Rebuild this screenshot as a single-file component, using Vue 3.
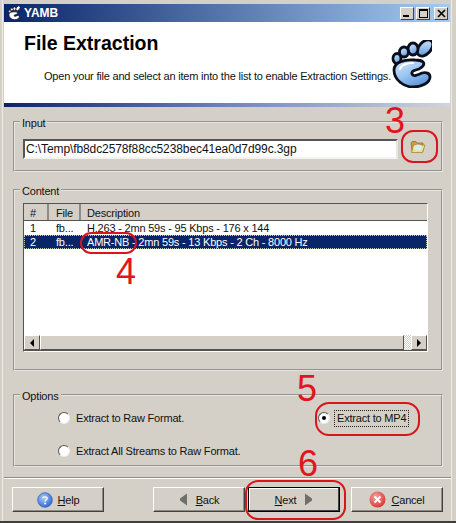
<script setup>
const rows = [
  { id: 1, file: 'fb...', desc: 'H.263 - 2mn 59s - 95 Kbps - 176 x 144', selected: false },
  { id: 2, file: 'fb...', desc: 'AMR-NB - 2mn 59s - 13 Kbps - 2 Ch - 8000 Hz', selected: true }
]

const notes = [
  { n: 3, cls: 'n3' },
  { n: 4, cls: 'n4' },
  { n: 5, cls: 'n5' },
  { n: 6, cls: 'n6' }
]
</script>

<template>
  <div class="window">
    <div class="titlebar">
      <svg class="title-foot" viewBox="0 0 41 48">
        <g fill="#fff" stroke="#111" stroke-width="2.5">
          <ellipse cx="34" cy="8" rx="6" ry="9.500" transform="rotate(42 34 8)" />
          <ellipse cx="22" cy="9" rx="5" ry="6" />
          <ellipse cx="13" cy="12" rx="4.500" ry="5" />
          <ellipse cx="6" cy="18.500" rx="4" ry="5" />
          <path d="M24 20C14 19 3 22 3 30C3 40 13 47 22 47C30 47 39 43 39 37C39 33 35 32 31 33C27 35 22 37 21 34C20 31 24 30 28 29C32 27 34 24 32 22C30 20 26 20 24 20Z" />
        </g>
      </svg>
      <span class="title-text">YAMB</span>
      <div class="controls">
        <span class="ctl"><i class="min"></i></span>
        <span class="ctl"><i class="max"></i></span>
        <span class="ctl close">
          <svg viewBox="0 0 9 9" width="9" height="9"><path d="M1 1L8 8M8 1L1 8" stroke="#000" stroke-width="1.6" /></svg>
        </span>
      </div>
    </div>

    <div class="header">
      <div class="header-text">
        <h1>File Extraction</h1>
        <p>Open your file and select an item into the list to enable Extraction Settings.</p>
      </div>
      <svg class="foot" viewBox="0 0 41 48">
        <defs>
          <linearGradient id="footfill" x1="0" y1="0" x2="0.6" y2="1">
            <stop offset="0" stop-color="#d6e8fa" />
            <stop offset="0.55" stop-color="#9cc5f0" />
            <stop offset="1" stop-color="#5f97dc" />
          </linearGradient>
        </defs>
        <g fill="url(#footfill)" stroke="#0b0f1c" stroke-width="2.800">
          <ellipse cx="34" cy="8" rx="6" ry="9.500" transform="rotate(42 34 8)" />
          <ellipse cx="22" cy="9" rx="5" ry="6" />
          <ellipse cx="13" cy="12" rx="4.500" ry="5" />
          <ellipse cx="6" cy="18.500" rx="4" ry="5" />
          <path d="M24 20C14 19 3 22 3 30C3 40 13 47 22 47C30 47 39 43 39 37C39 33 35 32 31 33C27 35 22 37 21 34C20 31 24 30 28 29C32 27 34 24 32 22C30 20 26 20 24 20Z" />
        </g>
        <path d="M9 29C10 25 16 23 22 23" fill="none" stroke="#fff" stroke-width="2" stroke-linecap="round" />
      </svg>
    </div>
    <div class="header-bar"></div>

    <div class="body">
      <div class="group input-group">
        <span class="legend">Input</span>
        <div class="input-row">
          <input class="path" type="text" value="C:\Temp\fb8dc2578f88cc5238bec41ea0d7d99c.3gp" readonly>
          <button class="browse">
            <svg width="16" height="14" viewBox="0 0 16 14">
              <path d="M1 3L2 1.500H6L7 3H13V11.500H2Z" fill="#c9a040" stroke="#8a6a20" stroke-width="0.7" />
              <path d="M3.500 5H15L12.500 12.500H1.500Z" fill="#f3dc8c" stroke="#a07c28" stroke-width="0.7" />
              <ellipse cx="8" cy="7.500" rx="4" ry="3" fill="#d5ecf3" />
            </svg>
          </button>
        </div>
      </div>

      <div class="group content-group">
        <span class="legend">Content</span>
        <div class="list">
          <div class="list-head">
            <span class="th c1">#</span>
            <span class="th c2">File</span>
            <span class="th c3">Description</span>
          </div>
          <div class="list-rows">
            <div v-for="r in rows" :key="r.id" class="row" :class="{ selected: r.selected }">
              <span class="c1">{{ r.id }}</span>
              <span class="c2">{{ r.file }}</span>
              <span class="c3">{{ r.desc }}</span>
            </div>
          </div>
          <div class="hscroll">
            <span class="sb-btn"><i class="tri-left"></i></span>
            <span class="sb-thumb"></span>
            <span class="sb-track"></span>
            <span class="sb-btn"><i class="tri-right"></i></span>
          </div>
        </div>
      </div>

      <div class="group options-group">
        <span class="legend">Options</span>
        <div class="options">
          <label class="opt"><span class="radio"></span>Extract to Raw Format.</label>
          <label class="opt"><span class="radio on"></span><span class="focus">Extract to MP4</span></label>
          <label class="opt wide"><span class="radio"></span>Extract All Streams to Raw Format.</label>
        </div>
      </div>
    </div>

    <div class="separator"></div>

    <div class="buttons">
      <button class="btn help-btn">
        <svg width="16" height="16" viewBox="0 0 17 17">
          <defs>
            <radialGradient id="helpfill" cx="0.4" cy="0.35" r="0.7">
              <stop offset="0" stop-color="#a9cdf7" />
              <stop offset="1" stop-color="#2a62cf" />
            </radialGradient>
          </defs>
          <circle cx="8.500" cy="8.500" r="7.800" fill="url(#helpfill)" stroke="#3a66b8" stroke-width="0.8" />
          <path d="M6.300 6.500C6.500 4.700 10.700 4.600 10.700 6.800C10.700 8.300 8.600 8.300 8.600 10" fill="none" stroke="#fff" stroke-width="1.500" />
          <circle cx="8.600" cy="12.200" r="1" fill="#fff" />
        </svg>
        <span><u>H</u>elp</span>
      </button>
      <button class="btn back-btn">
        <svg width="9" height="13" viewBox="0 0 9 13"><path d="M8 0.500V12.500L1 7.500V5.500Z" fill="#6f6f6c" /></svg>
        <span class="back-label"><u>B</u>ack</span>
      </button>
      <button class="btn next-btn">
        <span><u>N</u>ext</span>
        <svg class="next-arrow" width="9" height="13" viewBox="0 0 9 13"><path d="M1 0.500V12.500L8 7.500V5.500Z" fill="#6f6f6c" /></svg>
      </button>
      <button class="btn cancel-btn">
        <svg width="17" height="17" viewBox="0 0 17 17">
          <defs>
            <radialGradient id="cancelfill" cx="0.4" cy="0.35" r="0.7">
              <stop offset="0" stop-color="#f5a6a0" />
              <stop offset="1" stop-color="#d8322e" />
            </radialGradient>
          </defs>
          <circle cx="8.500" cy="8.500" r="8" fill="url(#cancelfill)" />
          <path d="M5.500 5.500L11.500 11.500M11.500 5.500L5.500 11.500" stroke="#fff" stroke-width="2" />
        </svg>
        <span><u>C</u>ancel</span>
      </button>
    </div>

    <span v-for="m in notes" :key="m.n" class="note-num" :class="m.cls">{{ m.n }}</span>
    <span class="mark mark3"></span>
    <span class="mark mark4"></span>
    <span class="mark mark5"></span>
    <span class="mark mark6"></span>
  </div>
</template>

<style scoped>
.window {
  position: relative;
  box-sizing: border-box;
  width: 456px;
  height: 523px;
  overflow: hidden;
  padding: 4px 0 0 4px;
  background:
    linear-gradient(#ecebe6, #ecebe6) no-repeat 451px 0 / 1px 100%,
    linear-gradient(#ecebe6, #ecebe6) no-repeat 2px 0 / 1px 100%,
    #d4d0c8;
  border-bottom: 2px solid #3f3f3c;
  font-family: "Liberation Sans", Arial, sans-serif;
  font-size: 11px;
  letter-spacing: -0.2px;
  color: #111;
}

.titlebar {
  display: flex;
  align-items: center;
  width: 446px;
  height: 18px;
  background: linear-gradient(90deg, #0a246a, #a6caf0);
}

.title-foot {
  width: 12px;
  height: 14px;
  margin-left: 4px;
}

.title-text {
  margin-left: 4px;
  font-weight: 700;
  font-size: 12px;
  letter-spacing: 0;
  color: #fff;
}

.controls {
  display: flex;
  margin-left: auto;
  margin-right: 2px;
}

.ctl {
  display: flex;
  align-items: center;
  justify-content: center;
  box-sizing: border-box;
  width: 14px;
  height: 13px;
  margin-left: 2px;
  background: #d4d0c8;
  border: 1px solid;
  border-color: #fff #404040 #404040 #fff;
}

.close {
  margin-left: 4px;
}

.min {
  width: 6px;
  height: 2px;
  margin-top: 6px;
  margin-right: 2px;
  background: #000;
}

.max {
  box-sizing: border-box;
  width: 9px;
  height: 9px;
  border: 1px solid #000;
  border-top-width: 2px;
}

.header {
  display: flex;
  width: 446px;
  height: 81px;
  background: #fff;
}

.header-text {
  width: 387px;
}

h1 {
  margin: 9px 0 0 20px;
  font-size: 19.500px;
  line-height: 24px;
  font-weight: 700;
  letter-spacing: 0;
  color: #000;
}

p {
  margin: 14px 0 0 40px;
  line-height: 14px;
  white-space: nowrap;
}

.foot {
  flex: none;
  width: 41px;
  height: 48px;
  margin-top: 18px;
}

.header-bar {
  width: 446px;
  height: 4px;
  background: linear-gradient(90deg, #0a246a, #6d86b8 50%, #d0d4e0);
}

.body {
  padding: 14px 0 0 9px;
}

.group {
  position: relative;
  box-sizing: border-box;
  width: 430px;
  border: 2px groove #e8e6e0;
}

.legend {
  position: absolute;
  top: -7px;
  left: 5px;
  padding: 0 2px;
  background: #d4d0c8;
  line-height: 14px;
}

.input-group {
  height: 51px;
}

.input-row {
  display: flex;
  align-items: flex-start;
  padding: 16px 0 0 8px;
}

.path {
  box-sizing: border-box;
  width: 375px;
  height: 20px;
  padding: 0 1px;
  border: 2px solid;
  border-color: #555 #e8e6e0 #f4f3ef #555;
  background: #fff;
  font: inherit;
  font-size: 12px;
  letter-spacing: -0.1px;
  color: #111;
  outline: none;
}

.browse {
  display: flex;
  align-items: center;
  justify-content: center;
  width: 32px;
  height: 26px;
  margin: -5px 0 0 4px;
  padding: 0;
  border: none;
  background: none;
}

.content-group {
  height: 182px;
  margin-top: 17px;
  padding: 12px 0 0 8px;
}

.list {
  display: flex;
  flex-direction: column;
  box-sizing: border-box;
  width: 405px;
  height: 149px;
  border: 1px solid;
  border-color: #555 #fff #fff #555;
  background: #fff;
}

.list-head {
  display: flex;
  height: 16px;
  background: #d4d0c8;
  border-bottom: 1px solid #55534e;
  line-height: 18px;
}

.th {
  box-sizing: border-box;
  border-right: 2px solid #8f8c85;
}

.th.c3 {
  border-right: none;
}

.c1 {
  flex: none;
  box-sizing: border-box;
  width: 25px;
  padding-left: 6px;
}

.c2 {
  flex: none;
  box-sizing: border-box;
  width: 32px;
  padding-left: 7px;
}

.c3 {
  flex: 1;
  padding-left: 6px;
  white-space: nowrap;
}

.list-rows {
  flex: 1;
}

.row {
  display: flex;
  height: 14px;
  line-height: 14px;
}

.row.selected {
  background: #0a246a;
  color: #fff;
  outline: 1px dotted #c8c8c0;
  outline-offset: -1px;
}

.hscroll {
  display: flex;
  height: 15px;
  background: #d4d0c8;
  border-bottom: 1px solid #55534e;
}

.sb-btn {
  display: flex;
  align-items: center;
  justify-content: center;
  box-sizing: border-box;
  width: 16px;
  height: 15px;
  border: 1px solid;
  border-color: #fff #55534e #55534e #fff;
}

.sb-thumb {
  box-sizing: border-box;
  width: 364px;
  border: 1px solid;
  border-color: #fff #55534e #55534e #fff;
}

.sb-track {
  flex: 1;
  background: repeating-conic-gradient(#fff 0 25%, #d4d0c8 0 50%) 0 0 / 2px 2px;
}

.tri-left {
  border: 4px solid transparent;
  border-right-color: #000;
  border-left-width: 0;
}

.tri-right {
  border: 4px solid transparent;
  border-left-color: #000;
  border-right-width: 0;
}

.options-group {
  height: 73px;
  margin-top: 23px;
}

.options {
  display: grid;
  grid-template-columns: 260px 1fr;
  row-gap: 19px;
  padding: 15px 0 0 43px;
}

.opt {
  display: flex;
  align-items: center;
  height: 14px;
  white-space: nowrap;
}

.wide {
  grid-column: 1 / -1;
}

.radio {
  position: relative;
  flex: none;
  box-sizing: border-box;
  width: 12px;
  height: 12px;
  margin-right: 6px;
  border-radius: 50%;
  background: #fff;
  border: 1px solid;
  border-color: #555 #eee #eee #555;
}

.radio.on::after {
  content: '';
  position: absolute;
  top: 3px;
  left: 3px;
  width: 4px;
  height: 4px;
  border-radius: 50%;
  background: #000;
}

.focus {
  margin-left: -1px;
  padding: 0 2px;
  line-height: 15px;
  outline: 1px dotted #222;
}

.separator {
  box-sizing: border-box;
  width: 447px;
  height: 2px;
  margin-top: 10px;
  border-top: 1px solid #8f8c85;
  border-bottom: 1px solid #fff;
}

.buttons {
  display: flex;
  padding: 8px 0 0 8px;
}

.btn {
  display: flex;
  align-items: center;
  justify-content: center;
  box-sizing: border-box;
  width: 92px;
  height: 25px;
  padding: 0;
  background: #d4d0c8;
  border: 1px solid;
  border-color: #fff #404040 #404040 #fff;
  box-shadow: inset -1px -1px 0 #8f8c85;
  font: inherit;
  letter-spacing: -0.2px;
  color: #111;
}

.btn svg {
  flex: none;
}

.help-btn span,
.cancel-btn span {
  margin-left: 5px;
}

.back-btn {
  margin-left: 49px;
}

.back-label {
  margin-left: 8px;
}

.next-btn {
  margin-left: 3px;
  border: 1px solid #000;
  box-shadow: inset -1px -1px 0 #404040, inset 1px 1px 0 #fff;
}

.next-arrow {
  margin-left: 8px;
}

.cancel-btn {
  margin-left: 11px;
}

.note-num {
  position: absolute;
  font-size: 36px;
  line-height: 36px;
  letter-spacing: 0;
  color: #e0161c;
}

.n3 { left: 385px; top: 103px; }
.n4 { left: 116px; top: 254px; }
.n5 { left: 297px; top: 371px; }
.n6 { left: 298px; top: 446px; }

.mark {
  position: absolute;
  box-sizing: border-box;
  border: 2px solid #d8141c;
}

.mark3 { left: 401px; top: 130px; width: 37px; height: 33px; border-radius: 12px; }
.mark4 { left: 80px; top: 232px; width: 57px; height: 22px; border-radius: 11px; }
.mark5 { left: 315px; top: 402px; width: 105px; height: 34px; border-radius: 14px; }
.mark6 { left: 245px; top: 480px; width: 101px; height: 40px; border-radius: 13px; }
</style>
